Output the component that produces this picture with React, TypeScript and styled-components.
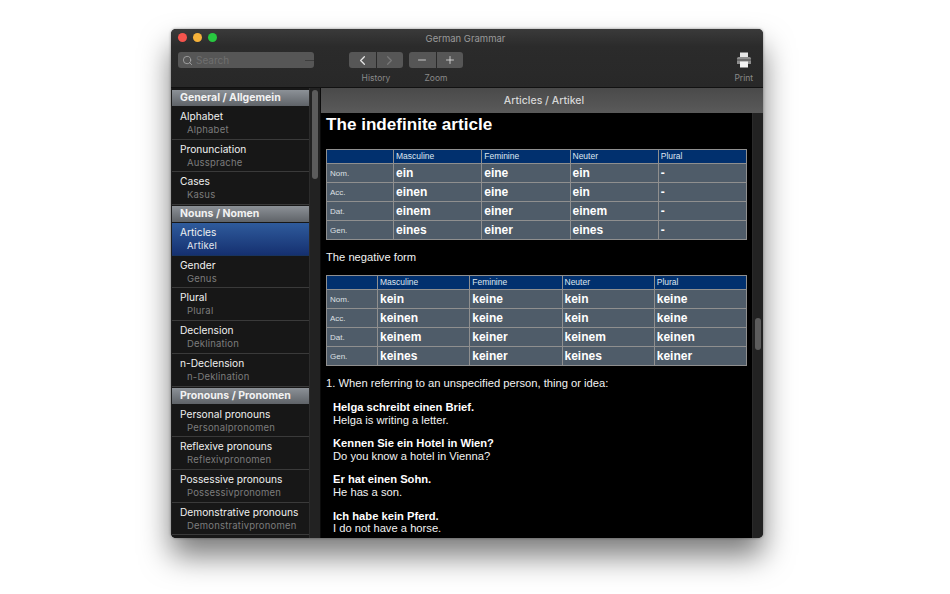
import React from 'react';
import styled, { createGlobalStyle } from 'styled-components';
import { ChevronLeft, ChevronRight, Minus, Plus, Search } from 'lucide-react';

const GlobalStyle = createGlobalStyle`
  html, body {
    margin: 0;
    background: #fff;
    overflow: hidden;
  }
  * { box-sizing: border-box; }
`;

const Page = styled.div`
  width: 950px;
  height: 594px;
  padding: 29px 0 0 171px;
  font-family: Inter, "Liberation Sans", sans-serif;
`;

const Win = styled.div`
  width: 592px;
  height: 509px;
  border-radius: 5px;
  overflow: hidden;
  background: #1e1e1e;
  display: flex;
  flex-direction: column;
  box-shadow: 0 18px 30px rgba(0, 0, 0, 0.52), 0 0 3px rgba(0, 0, 0, 0.4);
`;

const TitleArea = styled.div`
  height: 59px;
  flex: none;
  background: linear-gradient(#3a3a3a, #2b2b2b 30%, #282828);
  border-bottom: 1px solid #111;
  padding: 0 10px 0 7px;
  display: flex;
  flex-direction: column;
`;

const TitleBar = styled.div`
  height: 19px;
  position: relative;
  display: flex;
  justify-content: center;
  align-items: center;
  color: #9a9a9a;
  font-size: 9.5px;
`;

const Lights = styled.div`
  position: absolute;
  left: 0;
  top: 4px;
  display: flex;
  gap: 6px;
`;

const Light = styled.span<{ $color: string }>`
  width: 9px;
  height: 9px;
  border-radius: 50%;
  background: ${(p) => p.$color};
`;

const Toolbar = styled.div`
  flex: 1;
  display: flex;
  padding-top: 4px;
`;

const SearchBox = styled.div`
  width: 136px;
  height: 16px;
  border-radius: 3px;
  background: #565656;
  display: flex;
  align-items: center;
  gap: 3px;
  padding-left: 4px;
  color: #6f6f6f;
  font-size: 10px;
  position: relative;
  svg { color: #b4b4b4; }
  &::after {
    content: '';
    position: absolute;
    right: 0;
    top: 8px;
    width: 9px;
    height: 1px;
    background: #3d3d3d;
  }
`;

const ToolGroup = styled.div<{ $left: number }>`
  margin-left: ${(p) => p.$left}px;
  display: flex;
  flex-direction: column;
  align-items: center;
  gap: 5px;
`;

const Segments = styled.div`
  display: flex;
  gap: 1px;
  border-radius: 3px;
  overflow: hidden;
`;

const Segment = styled.div<{ $dim?: boolean }>`
  width: 26.5px;
  height: 16px;
  background: #565656;
  display: flex;
  align-items: center;
  justify-content: center;
  color: ${(p) => (p.$dim ? '#777' : '#e4e4e4')};
`;

const ToolLabel = styled.div`
  color: #8a8a8a;
  font-size: 8.5px;
  line-height: 10px;
`;

const PrintTool = styled.div`
  margin-left: auto;
  display: flex;
  flex-direction: column;
  align-items: center;
  gap: 5px;
`;

const Body = styled.div`
  flex: 1;
  display: flex;
  min-height: 0;
`;

const Sidebar = styled.div`
  width: 150px;
  flex: none;
  display: flex;
  background: #1e1e1e;
  border-right: 1px solid #0c0c0c;
  padding-left: 1px;
`;

const List = styled.div`
  width: 137px;
  flex: none;
  overflow: hidden;
  padding-top: 1px;
  background: #171717;
`;

const SideTrack = styled.div`
  flex: 1;
  position: relative;
  background: #222;
  border-left: 1px solid #2c2c2c;
`;

const Thumb = styled.div<{ $top: number; $height: number }>`
  position: absolute;
  left: 2px;
  width: 6px;
  border-radius: 3px;
  background: #5c5c5c;
  top: ${(p) => p.$top}px;
  height: ${(p) => p.$height}px;
`;

const SectionHead = styled.div`
  height: 16px;
  background: linear-gradient(#8c9197, #5f6368);
  color: #f2f2f2;
  font-weight: 700;
  font-size: 10.5px;
  line-height: 16px;
  padding-left: 8px;
  margin: 1px 0;
`;

const Item = styled.div<{ $active?: boolean }>`
  height: 32.7px;
  padding: 3px 0 0 8px;
  border-bottom: 1px solid ${(p) => (p.$active ? '#17335f' : '#3a3a3a')};
  background: ${(p) => (p.$active ? 'linear-gradient(#2f5b9c, #153070)' : 'transparent')};
`;

const ItemTitle = styled.div`
  color: #f0f0f0;
  font-size: 10.2px;
  line-height: 13px;
`;

const ItemSub = styled.div<{ $active?: boolean }>`
  color: ${(p) => (p.$active ? '#e2e6ee' : '#7c7c7c')};
  font-size: 9.5px;
  letter-spacing: 0.2px;
  line-height: 13px;
  padding-left: 7px;
`;

const Main = styled.div`
  flex: 1;
  min-width: 0;
  display: flex;
  flex-direction: column;
`;

const MainHead = styled.div`
  height: 25px;
  flex: none;
  padding-left: 4px;
  background: linear-gradient(#4a4a4a, #5a5a5a);
  color: #d6d6d6;
  font-size: 10.5px;
  font-weight: 500;
  display: flex;
  align-items: center;
  justify-content: center;
`;

const MainBody = styled.div`
  flex: 1;
  min-height: 0;
  display: flex;
`;

const Doc = styled.div`
  width: 431px;
  flex: none;
  background: #000;
  color: #f2f2f2;
  overflow: hidden;
  padding: 0 5px;
  font-family: "Liberation Sans", Arial, sans-serif;
  font-size: 11.2px;
`;

const DocTitle = styled.h1`
  margin: 0;
  padding-top: 1px;
  font-size: 17.1px;
  line-height: 22px;
  font-weight: 700;
  color: #fff;
`;

const DocTrack = styled.div`
  flex: 1;
  position: relative;
  background: #222;
  border-left: 1px solid #2a2a2a;
`;

const Grammar = styled.table<{ $top: number }>`
  width: 421px;
  table-layout: fixed;
  border-collapse: collapse;
  margin-top: ${(p) => p.$top}px;
  border: 1px solid #8f8f8f;
`;

const Th = styled.th<{ $width?: number }>`
  height: 14px;
  padding: 0 0 1px 2px;
  width: ${(p) => (p.$width ? `${p.$width}px` : 'auto')};
  background: #01306e;
  border: 1px solid #8f8f8f;
  color: #dfe7f2;
  font-size: 8.5px;
  font-weight: 400;
  text-align: left;
`;

const CaseCell = styled.td`
  height: 19px;
  padding: 0 0 0 3px;
  background: #4f5c69;
  border: 1px solid #8f8f8f;
  color: #dde0e4;
  font-size: 8px;
`;

const FormCell = styled.td`
  height: 19px;
  padding: 0 0 0 2px;
  background: #4f5c69;
  border: 1px solid #8f8f8f;
  color: #fff;
  font-size: 12px;
  font-weight: 700;
`;

const Para = styled.p<{ $top: number }>`
  margin: ${(p) => p.$top}px 0 0;
  line-height: 13px;
`;

const Example = styled.div`
  margin-top: 11px;
  padding-left: 7px;
  line-height: 12.6px;
  b { display: block; color: #fff; }
`;

type Row = { title: string; sub: string; active?: boolean };
type Section = { head: string; rows: Row[] };

const sections: Section[] = [
  {
    head: 'General / Allgemein',
    rows: [
      { title: 'Alphabet', sub: 'Alphabet' },
      { title: 'Pronunciation', sub: 'Aussprache' },
      { title: 'Cases', sub: 'Kasus' },
    ],
  },
  {
    head: 'Nouns / Nomen',
    rows: [
      { title: 'Articles', sub: 'Artikel', active: true },
      { title: 'Gender', sub: 'Genus' },
      { title: 'Plural', sub: 'Plural' },
      { title: 'Declension', sub: 'Deklination' },
      { title: 'n-Declension', sub: 'n-Deklination' },
    ],
  },
  {
    head: 'Pronouns / Pronomen',
    rows: [
      { title: 'Personal pronouns', sub: 'Personalpronomen' },
      { title: 'Reflexive pronouns', sub: 'Reflexivpronomen' },
      { title: 'Possessive pronouns', sub: 'Possessivpronomen' },
      { title: 'Demonstrative pronouns', sub: 'Demonstrativpronomen' },
    ],
  },
];

const genders = ['Masculine', 'Feminine', 'Neuter', 'Plural'];
const cases = ['Nom.', 'Acc.', 'Dat.', 'Gen.'];

const indefinite = [
  ['ein', 'eine', 'ein', '-'],
  ['einen', 'eine', 'ein', '-'],
  ['einem', 'einer', 'einem', '-'],
  ['eines', 'einer', 'eines', '-'],
];

const negative = [
  ['kein', 'keine', 'kein', 'keine'],
  ['keinen', 'keine', 'kein', 'keine'],
  ['keinem', 'keiner', 'keinem', 'keinen'],
  ['keines', 'keiner', 'keines', 'keiner'],
];

const examples = [
  ['Helga schreibt einen Brief.', 'Helga is writing a letter.'],
  ['Kennen Sie ein Hotel in Wien?', 'Do you know a hotel in Vienna?'],
  ['Er hat einen Sohn.', 'He has a son.'],
  ['Ich habe kein Pferd.', 'I do not have a horse.'],
];

const FormTable = ({ first, top, forms }: { first: number; top: number; forms: string[][] }) => (
  <Grammar $top={top}>
    <thead>
      <tr>
        <Th $width={first} />
        {genders.map((g) => (
          <Th key={g}>{g}</Th>
        ))}
      </tr>
    </thead>
    <tbody>
      {forms.map((row, i) => (
        <tr key={cases[i]}>
          <CaseCell>{cases[i]}</CaseCell>
          {row.map((f, j) => (
            <FormCell key={j}>{f}</FormCell>
          ))}
        </tr>
      ))}
    </tbody>
  </Grammar>
);

const PrinterIcon = () => (
  <svg width="16" height="16" viewBox="0 0 16 16">
    <rect x="4" y="0.5" width="8" height="4.5" fill="#e6e6e6" />
    <path d="M1 6.5 Q1 5 2.5 5 H13.5 Q15 5 15 6.5 V12 H1 Z" fill="#8e8e8e" />
    <rect x="1" y="7" width="14" height="2" fill="#6a6a6a" />
    <rect x="4" y="9.5" width="8" height="6" fill="#f2f2f2" />
  </svg>
);

export default function App() {
  return (
    <Page>
      <GlobalStyle />
      <Win>
        <TitleArea>
          <TitleBar>
            <Lights>
              <Light $color="#f5544d" />
              <Light $color="#f6b23a" />
              <Light $color="#28c840" />
            </Lights>
            German Grammar
          </TitleBar>
          <Toolbar>
            <SearchBox>
              <Search size={11} strokeWidth={1.6} />
              Search
            </SearchBox>
            <ToolGroup $left={35}>
              <Segments>
                <Segment>
                  <ChevronLeft size={15} strokeWidth={2} />
                </Segment>
                <Segment $dim>
                  <ChevronRight size={15} strokeWidth={2} />
                </Segment>
              </Segments>
              <ToolLabel>History</ToolLabel>
            </ToolGroup>
            <ToolGroup $left={6}>
              <Segments>
                <Segment>
                  <Minus size={12} strokeWidth={1.6} />
                </Segment>
                <Segment>
                  <Plus size={12} strokeWidth={1.6} />
                </Segment>
              </Segments>
              <ToolLabel>Zoom</ToolLabel>
            </ToolGroup>
            <PrintTool>
              <PrinterIcon />
              <ToolLabel>Print</ToolLabel>
            </PrintTool>
          </Toolbar>
        </TitleArea>
        <Body>
          <Sidebar>
            <List>
              {sections.map((s) => (
                <React.Fragment key={s.head}>
                  <SectionHead>{s.head}</SectionHead>
                  {s.rows.map((r) => (
                    <Item key={r.title} $active={r.active}>
                      <ItemTitle>{r.title}</ItemTitle>
                      <ItemSub $active={r.active}>{r.sub}</ItemSub>
                    </Item>
                  ))}
                </React.Fragment>
              ))}
            </List>
            <SideTrack>
              <Thumb $top={2} $height={89} />
            </SideTrack>
          </Sidebar>
          <Main>
            <MainHead>Articles / Artikel</MainHead>
            <MainBody>
              <Doc>
                <DocTitle>The indefinite article</DocTitle>
                <FormTable first={67} top={13} forms={indefinite} />
                <Para $top={11}>The negative form</Para>
                <FormTable first={51} top={11} forms={negative} />
                <Para $top={11}>1. When referring to an unspecified person, thing or idea:</Para>
                {examples.map(([de, en]) => (
                  <Example key={de}>
                    <b>{de}</b>
                    {en}
                  </Example>
                ))}
              </Doc>
              <DocTrack>
                <Thumb $top={205} $height={32} />
              </DocTrack>
            </MainBody>
          </Main>
        </Body>
      </Win>
    </Page>
  );
}
